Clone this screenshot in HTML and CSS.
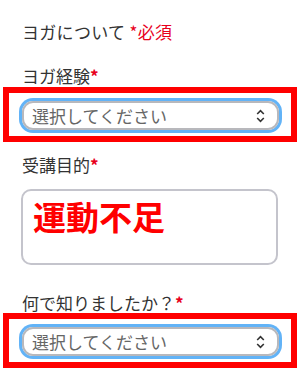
FILE: index.html
```html
<!DOCTYPE html>
<html lang="ja">
<head>
    <meta charset="UTF-8">
    <meta name="viewport" content="width=device-width, initial-scale=1.0">
    <title>ヨガについて</title>
    <link rel="stylesheet" href="styles.css">
</head>
<body>
    <form class="form">
        <div class="section-title">ヨガについて <span class="req">*必須</span></div>

        <div class="field">
            <label class="label">ヨガ経験<span class="star">*</span></label>
            <div class="mark">
                <div class="select">
                    <span>選択してください</span>
                    <svg class="chevron" width="9" height="14" viewBox="0 0 9 14">
                        <path d="M1.2 5 L4.5 1.7 L7.8 5 M1.2 9 L4.5 12.3 L7.8 9" fill="none" stroke="#333" stroke-width="1.6"/>
                    </svg>
                </div>
            </div>
        </div>

        <div class="field">
            <label class="label">受講目的<span class="star">*</span></label>
            <div class="textarea">運動不足</div>
        </div>

        <div class="field last">
            <label class="label">何で知りましたか？<span class="star">*</span></label>
            <div class="mark">
                <div class="select">
                    <span>選択してください</span>
                    <svg class="chevron" width="9" height="14" viewBox="0 0 9 14">
                        <path d="M1.2 5 L4.5 1.7 L7.8 5 M1.2 9 L4.5 12.3 L7.8 9" fill="none" stroke="#333" stroke-width="1.6"/>
                    </svg>
                </div>
            </div>
        </div>
    </form>
</body>
</html>
```

FILE: styles.css
```css
* {
    margin: 0;
    padding: 0;
    box-sizing: border-box;
}

body {
    background: #fff;
    font-family: 'Noto Sans CJK JP', 'Noto Sans', sans-serif;
    color: #333;
    width: 300px;
    height: 378px;
    overflow: hidden;
}

.section-title {
    font-size: 17px;
    line-height: 24px;
    padding: 20px 0 0 22px;
    letter-spacing: 0.3px;
}

.req {
    color: #e8001c;
}

.field {
    margin-top: 21px;
}

.label {
    display: block;
    font-size: 17px;
    line-height: 22px;
    padding-left: 22px;
}

.star {
    color: #e8001c;
    font-weight: 700;
}

.mark {
    margin: 0 3px;
    border: 6px solid #ff0000;
    padding: 8px 12px 6px 13px;
}

.select {
    display: flex;
    align-items: center;
    justify-content: space-between;
    height: 29px;
    border: 2px solid #b8b8bc;
    border-radius: 11px;
    box-shadow: 0 0 0 3px #62b3f7;
    padding: 0 12px 0 8px;
    font-size: 17px;
    color: #666;
}

.chevron {
    display: block;
}

.field:nth-child(3) {
    margin-top: 12px;
}

.textarea {
    margin: 13px 22px 0 21px;
    height: 76px;
    border: 2px solid #c4c4cc;
    border-radius: 10px;
    padding: 6px 10px;
    font-size: 33px;
    line-height: 38px;
    font-weight: 700;
    color: #ff0000;
}

.field.last {
    margin-top: 27px;
}

.field.last .label {
    line-height: 21px;
}
```
